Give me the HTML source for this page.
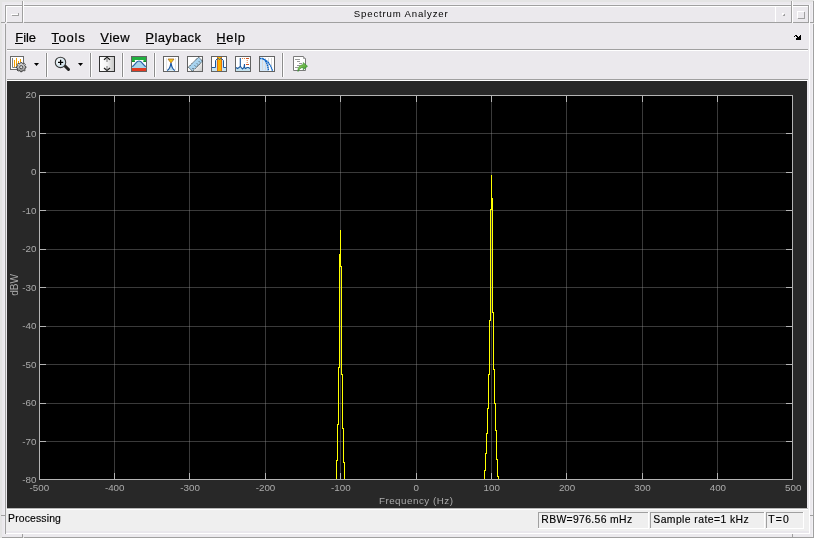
<!DOCTYPE html>
<html><head><meta charset="utf-8"><style>
html,body{margin:0;padding:0;width:814px;height:538px;overflow:hidden;background:#e4e4e4}
svg{display:block}
text{font-family:"Liberation Sans",sans-serif}
</style></head><body>
<svg width="814" height="538" viewBox="0 0 814 538">
<g shape-rendering="crispEdges">
<rect x="0" y="0" width="814" height="538" fill="#e4e4e4"/><rect x="2" y="2" width="811" height="535" fill="#ebe9ed"/><rect x="4" y="4" width="807" height="1" fill="#f0eff3"/><rect x="4" y="4" width="1" height="531" fill="#f0eff3"/><rect x="812" y="2" width="1" height="535" fill="#f2f1f5"/><rect x="6" y="6" width="803" height="16" fill="#ebe9ed"/><rect x="6" y="23" width="803" height="510" fill="#ebe9ed"/><rect x="5" y="5" width="787" height="1" fill="#a0a0a0"/><rect x="793" y="5" width="17" height="1" fill="#a0a0a0"/><rect x="6" y="6" width="785" height="1" fill="#ffffff"/><rect x="793" y="6" width="16" height="1" fill="#ffffff"/><rect x="5" y="5" width="1" height="17" fill="#a0a0a0"/><rect x="5" y="24" width="1" height="510" fill="#a0a0a0"/><rect x="6" y="6" width="1" height="16" fill="#ffffff"/><rect x="22" y="1" width="1" height="22" fill="#a0a0a0"/><rect x="23" y="1" width="1" height="21" fill="#ffffff"/><rect x="1" y="22" width="4" height="1" fill="#a0a0a0"/><rect x="7" y="22" width="15" height="1" fill="#a0a0a0"/><rect x="24" y="22" width="767" height="1" fill="#a0a0a0"/><rect x="793" y="22" width="16" height="1" fill="#a0a0a0"/><rect x="810" y="22" width="4" height="1" fill="#a0a0a0"/><rect x="775" y="6" width="1" height="16" fill="#ffffff"/><rect x="791" y="1" width="1" height="22" fill="#a0a0a0"/><rect x="792" y="1" width="1" height="22" fill="#ffffff"/><rect x="808" y="5" width="1" height="18" fill="#a0a0a0"/><rect x="809" y="5" width="1" height="529" fill="#ffffff"/><rect x="813" y="1" width="1" height="22" fill="#a0a0a0"/><rect x="813" y="24" width="1" height="514" fill="#a0a0a0"/><rect x="11" y="14" width="7" height="1" fill="#ffffff"/><rect x="12" y="15" width="7" height="1" fill="#a0a0a0"/><rect x="18" y="13" width="1" height="3" fill="#a0a0a0"/><rect x="782" y="13" width="2" height="1" fill="#ffffff"/><rect x="782" y="13" width="1" height="2" fill="#ffffff"/><rect x="783" y="15" width="2" height="1" fill="#a0a0a0"/><rect x="784" y="14" width="1" height="2" fill="#a0a0a0"/><rect x="797" y="11" width="7" height="1" fill="#ffffff"/><rect x="797" y="11" width="1" height="7" fill="#ffffff"/><rect x="798" y="18" width="7" height="1" fill="#a0a0a0"/><rect x="804" y="12" width="1" height="7" fill="#a0a0a0"/><rect x="1" y="515" width="4" height="1" fill="#a0a0a0"/><rect x="810" y="515" width="4" height="1" fill="#a0a0a0"/><rect x="6" y="533" width="803" height="1" fill="#ffffff"/><rect x="2" y="537" width="20" height="1" fill="#a0a0a0"/><rect x="24" y="537" width="789" height="1" fill="#a0a0a0"/><rect x="22" y="534" width="1" height="4" fill="#a0a0a0"/><rect x="792" y="534" width="1" height="4" fill="#a0a0a0"/><rect x="7" y="49" width="801" height="1" fill="#a0a0a0"/><rect x="7" y="50" width="801" height="1" fill="#ffffff"/><rect x="7" y="79" width="801" height="1" fill="#a0a0a0"/><rect x="7" y="80" width="801" height="1" fill="#ffffff"/><rect x="46" y="53" width="1" height="24" fill="#8c8c8c"/><rect x="47" y="53" width="1" height="24" fill="#ffffff"/><rect x="45" y="53" width="1" height="24" fill="#f4f3f6"/><rect x="90" y="53" width="1" height="24" fill="#8c8c8c"/><rect x="91" y="53" width="1" height="24" fill="#ffffff"/><rect x="89" y="53" width="1" height="24" fill="#f4f3f6"/><rect x="122" y="53" width="1" height="24" fill="#8c8c8c"/><rect x="123" y="53" width="1" height="24" fill="#ffffff"/><rect x="121" y="53" width="1" height="24" fill="#f4f3f6"/><rect x="154" y="53" width="1" height="24" fill="#8c8c8c"/><rect x="155" y="53" width="1" height="24" fill="#ffffff"/><rect x="153" y="53" width="1" height="24" fill="#f4f3f6"/><rect x="282" y="53" width="1" height="24" fill="#8c8c8c"/><rect x="283" y="53" width="1" height="24" fill="#ffffff"/><rect x="281" y="53" width="1" height="24" fill="#f4f3f6"/><rect x="7" y="81" width="800" height="427" fill="#282828"/><rect x="6" y="508" width="803" height="25" fill="#efefef"/><rect x="7" y="508" width="801" height="1" fill="#b8b8b8"/><rect x="7" y="509" width="801" height="1" fill="#ffffff"/><rect x="6" y="531" width="803" height="2" fill="#e9e7ec"/><rect x="538" y="512" width="110" height="1" fill="#a0a0a0"/><rect x="538" y="512" width="1" height="16" fill="#a0a0a0"/><rect x="538" y="528" width="111" height="1" fill="#ffffff"/><rect x="648" y="512" width="1" height="17" fill="#ffffff"/><rect x="650" y="512" width="114" height="1" fill="#a0a0a0"/><rect x="650" y="512" width="1" height="16" fill="#a0a0a0"/><rect x="650" y="528" width="115" height="1" fill="#ffffff"/><rect x="764" y="512" width="1" height="17" fill="#ffffff"/><rect x="766" y="512" width="37" height="1" fill="#a0a0a0"/><rect x="766" y="512" width="1" height="16" fill="#a0a0a0"/><rect x="766" y="528" width="38" height="1" fill="#ffffff"/><rect x="803" y="512" width="1" height="17" fill="#ffffff"/><rect x="39" y="95" width="754" height="385" fill="#000000"/><rect x="114" y="96" width="1" height="383" fill="rgba(150,150,150,0.39)"/><rect x="189" y="96" width="1" height="383" fill="rgba(150,150,150,0.39)"/><rect x="265" y="96" width="1" height="383" fill="rgba(150,150,150,0.39)"/><rect x="340" y="96" width="1" height="383" fill="rgba(150,150,150,0.39)"/><rect x="416" y="96" width="1" height="383" fill="rgba(150,150,150,0.39)"/><rect x="491" y="96" width="1" height="383" fill="rgba(150,150,150,0.39)"/><rect x="566" y="96" width="1" height="383" fill="rgba(150,150,150,0.39)"/><rect x="642" y="96" width="1" height="383" fill="rgba(150,150,150,0.39)"/><rect x="717" y="96" width="1" height="383" fill="rgba(150,150,150,0.39)"/><rect x="40" y="133" width="752" height="1" fill="rgba(150,150,150,0.39)"/><rect x="40" y="172" width="752" height="1" fill="rgba(150,150,150,0.39)"/><rect x="40" y="210" width="752" height="1" fill="rgba(150,150,150,0.39)"/><rect x="40" y="249" width="752" height="1" fill="rgba(150,150,150,0.39)"/><rect x="40" y="287" width="752" height="1" fill="rgba(150,150,150,0.39)"/><rect x="40" y="326" width="752" height="1" fill="rgba(150,150,150,0.39)"/><rect x="40" y="364" width="752" height="1" fill="rgba(150,150,150,0.39)"/><rect x="40" y="403" width="752" height="1" fill="rgba(150,150,150,0.39)"/><rect x="40" y="441" width="752" height="1" fill="rgba(150,150,150,0.39)"/><rect x="340" y="230" width="1" height="37" fill="#ffff00"/><rect x="339" y="254" width="1" height="114" fill="#ffff00"/><rect x="341" y="266" width="1" height="109" fill="#ffff00"/><rect x="338" y="367" width="1" height="58" fill="#ffff00"/><rect x="342" y="374" width="1" height="55" fill="#ffff00"/><rect x="337" y="424" width="1" height="37" fill="#ffff00"/><rect x="343" y="428" width="1" height="35" fill="#ffff00"/><rect x="336" y="460" width="1" height="20" fill="#ffff00"/><rect x="344" y="462" width="1" height="18" fill="#ffff00"/><rect x="491" y="175" width="1" height="35" fill="#ffff00"/><rect x="492" y="198" width="1" height="115" fill="#ffff00"/><rect x="490" y="209" width="1" height="112" fill="#ffff00"/><rect x="493" y="312" width="1" height="58" fill="#ffff00"/><rect x="489" y="320" width="1" height="55" fill="#ffff00"/><rect x="494" y="369" width="1" height="35" fill="#ffff00"/><rect x="488" y="374" width="1" height="35" fill="#ffff00"/><rect x="495" y="403" width="1" height="28" fill="#ffff00"/><rect x="487" y="408" width="1" height="26" fill="#ffff00"/><rect x="486" y="433" width="1" height="21" fill="#ffff00"/><rect x="496" y="430" width="1" height="30" fill="#ffff00"/><rect x="485" y="453" width="1" height="18" fill="#ffff00"/><rect x="497" y="459" width="1" height="18" fill="#ffff00"/><rect x="484" y="470" width="1" height="10" fill="#ffff00"/><rect x="498" y="476" width="1" height="4" fill="#ffff00"/><rect x="39" y="95" width="754" height="1" fill="#b4b4b4"/><rect x="39" y="479" width="754" height="1" fill="#b4b4b4"/><rect x="39" y="95" width="1" height="385" fill="#b4b4b4"/><rect x="792" y="95" width="1" height="385" fill="#b4b4b4"/><rect x="114" y="95" width="1" height="7" fill="#b4b4b4"/><rect x="114" y="473" width="1" height="7" fill="#b4b4b4"/><rect x="189" y="95" width="1" height="7" fill="#b4b4b4"/><rect x="189" y="473" width="1" height="7" fill="#b4b4b4"/><rect x="265" y="95" width="1" height="7" fill="#b4b4b4"/><rect x="265" y="473" width="1" height="7" fill="#b4b4b4"/><rect x="340" y="95" width="1" height="7" fill="#b4b4b4"/><rect x="340" y="473" width="1" height="7" fill="#b4b4b4"/><rect x="416" y="95" width="1" height="7" fill="#b4b4b4"/><rect x="416" y="473" width="1" height="7" fill="#b4b4b4"/><rect x="491" y="95" width="1" height="7" fill="#b4b4b4"/><rect x="491" y="473" width="1" height="7" fill="#b4b4b4"/><rect x="566" y="95" width="1" height="7" fill="#b4b4b4"/><rect x="566" y="473" width="1" height="7" fill="#b4b4b4"/><rect x="642" y="95" width="1" height="7" fill="#b4b4b4"/><rect x="642" y="473" width="1" height="7" fill="#b4b4b4"/><rect x="717" y="95" width="1" height="7" fill="#b4b4b4"/><rect x="717" y="473" width="1" height="7" fill="#b4b4b4"/><rect x="39" y="133" width="7" height="1" fill="#b4b4b4"/><rect x="786" y="133" width="7" height="1" fill="#b4b4b4"/><rect x="39" y="172" width="7" height="1" fill="#b4b4b4"/><rect x="786" y="172" width="7" height="1" fill="#b4b4b4"/><rect x="39" y="210" width="7" height="1" fill="#b4b4b4"/><rect x="786" y="210" width="7" height="1" fill="#b4b4b4"/><rect x="39" y="249" width="7" height="1" fill="#b4b4b4"/><rect x="786" y="249" width="7" height="1" fill="#b4b4b4"/><rect x="39" y="287" width="7" height="1" fill="#b4b4b4"/><rect x="786" y="287" width="7" height="1" fill="#b4b4b4"/><rect x="39" y="326" width="7" height="1" fill="#b4b4b4"/><rect x="786" y="326" width="7" height="1" fill="#b4b4b4"/><rect x="39" y="364" width="7" height="1" fill="#b4b4b4"/><rect x="786" y="364" width="7" height="1" fill="#b4b4b4"/><rect x="39" y="403" width="7" height="1" fill="#b4b4b4"/><rect x="786" y="403" width="7" height="1" fill="#b4b4b4"/><rect x="39" y="441" width="7" height="1" fill="#b4b4b4"/><rect x="786" y="441" width="7" height="1" fill="#b4b4b4"/><rect x="15" y="43" width="8" height="1" fill="#000"/><rect x="52" y="43" width="7" height="1" fill="#000"/><rect x="101" y="43" width="8" height="1" fill="#000"/><rect x="146" y="43" width="8" height="1" fill="#000"/><rect x="217" y="43" width="9" height="1" fill="#000"/>
</g>
<g style="will-change:transform">
<text x="36.5" y="98.3" font-size="9.8" fill="#ababab" text-anchor="end">20</text><text x="36.5" y="136.8" font-size="9.8" fill="#ababab" text-anchor="end">10</text><text x="36.5" y="175.3" font-size="9.8" fill="#ababab" text-anchor="end">0</text><text x="36.5" y="213.8" font-size="9.8" fill="#ababab" text-anchor="end">-10</text><text x="36.5" y="252.3" font-size="9.8" fill="#ababab" text-anchor="end">-20</text><text x="36.5" y="290.8" font-size="9.8" fill="#ababab" text-anchor="end">-30</text><text x="36.5" y="329.3" font-size="9.8" fill="#ababab" text-anchor="end">-40</text><text x="36.5" y="367.8" font-size="9.8" fill="#ababab" text-anchor="end">-50</text><text x="36.5" y="406.3" font-size="9.8" fill="#ababab" text-anchor="end">-60</text><text x="36.5" y="444.8" font-size="9.8" fill="#ababab" text-anchor="end">-70</text><text x="36.5" y="483.3" font-size="9.8" fill="#ababab" text-anchor="end">-80</text><text x="39.3" y="491.3" font-size="9.8" fill="#ababab" text-anchor="middle">-500</text><text x="114.7" y="491.3" font-size="9.8" fill="#ababab" text-anchor="middle">-400</text><text x="190.10000000000002" y="491.3" font-size="9.8" fill="#ababab" text-anchor="middle">-300</text><text x="265.50000000000006" y="491.3" font-size="9.8" fill="#ababab" text-anchor="middle">-200</text><text x="340.90000000000003" y="491.3" font-size="9.8" fill="#ababab" text-anchor="middle">-100</text><text x="416.3" y="491.3" font-size="9.8" fill="#ababab" text-anchor="middle">0</text><text x="491.70000000000005" y="491.3" font-size="9.8" fill="#ababab" text-anchor="middle">100</text><text x="567.1" y="491.3" font-size="9.8" fill="#ababab" text-anchor="middle">200</text><text x="642.5" y="491.3" font-size="9.8" fill="#ababab" text-anchor="middle">300</text><text x="717.9" y="491.3" font-size="9.8" fill="#ababab" text-anchor="middle">400</text><text x="793.3" y="491.3" font-size="9.8" fill="#ababab" text-anchor="middle">500</text><text x="378.90" y="503.6" font-size="9.8" fill="#ababab" textLength="74.10" lengthAdjust="spacing">Frequency (Hz)</text><text x="0" y="0" font-size="10" fill="#ababab" text-anchor="middle" transform="translate(18,285) rotate(-90)">dBW</text><text x="353.80" y="16.7" font-size="9.6" fill="#000" textLength="93.90" lengthAdjust="spacing">Spectrum Analyzer</text><text x="15.30" y="41.8" font-size="13" fill="#000" stroke="#000" stroke-width="0.2" textLength="20.60" lengthAdjust="spacing">File</text><text x="51.30" y="41.8" font-size="13" fill="#000" stroke="#000" stroke-width="0.2" textLength="33.50" lengthAdjust="spacing">Tools</text><text x="100.30" y="41.8" font-size="13" fill="#000" stroke="#000" stroke-width="0.2" textLength="29.40" lengthAdjust="spacing">View</text><text x="145.30" y="41.8" font-size="13" fill="#000" stroke="#000" stroke-width="0.2" textLength="55.70" lengthAdjust="spacing">Playback</text><text x="216.30" y="41.8" font-size="13" fill="#000" stroke="#000" stroke-width="0.2" textLength="28.60" lengthAdjust="spacing">Help</text><text x="8.10" y="521.8" font-size="10.4" fill="#000" stroke="#000" stroke-width="0.15" textLength="52.80" lengthAdjust="spacing">Processing</text><text x="541.30" y="522.7" font-size="10.4" fill="#000" stroke="#000" stroke-width="0.15" textLength="90.80" lengthAdjust="spacing">RBW=976.56 mHz</text><text x="653.30" y="522.7" font-size="10.4" fill="#000" stroke="#000" stroke-width="0.15" textLength="95.40" lengthAdjust="spacing">Sample rate=1 kHz</text><text x="768.30" y="522.7" font-size="10.4" fill="#000" stroke="#000" stroke-width="0.15" textLength="20.50" lengthAdjust="spacing">T=0</text>
</g>

<g fill="#000" shape-rendering="crispEdges"><rect x="794" y="36" width="1" height="1"/><rect x="795" y="35" width="2" height="1"/><rect x="796" y="36" width="2" height="1"/><rect x="797" y="37" width="4" height="1"/><rect x="799" y="36" width="2" height="1"/><rect x="800" y="35" width="1" height="1"/><rect x="796" y="38" width="5" height="2"/></g>

<defs>
<linearGradient id="gGear" x1="0" y1="0" x2="0" y2="1"><stop offset="0" stop-color="#e8e8e8"/><stop offset="1" stop-color="#8a8a8a"/></linearGradient>
<linearGradient id="gBox" x1="0" y1="0" x2="1" y2="0"><stop offset="0" stop-color="#ffffff"/><stop offset="0.5" stop-color="#f4f4f4"/><stop offset="1" stop-color="#c4c4c4"/></linearGradient>
<linearGradient id="gBox2" x1="0" y1="0" x2="1" y2="1"><stop offset="0.45" stop-color="#ffffff"/><stop offset="1" stop-color="#c8c8c8"/></linearGradient>
<radialGradient id="gLens" cx="0.4" cy="0.4" r="0.6"><stop offset="0" stop-color="#ffffff"/><stop offset="1" stop-color="#c8dde8"/></radialGradient>
<linearGradient id="gArrow" x1="0" y1="0" x2="1" y2="1"><stop offset="0" stop-color="#b8e070"/><stop offset="1" stop-color="#1f8a1f"/></linearGradient>
</defs>
<!-- icon1: spectrum settings -->
<g>
<rect x="10.5" y="56.5" width="13" height="13" fill="#ffffff" stroke="#6a6a6a" stroke-width="1"/>
<path d="M12.5 58 V67.5 H18" stroke="#808080" stroke-width="1" fill="none"/>
<rect x="14" y="60" width="1" height="7" fill="#f5a000"/>
<rect x="16" y="58" width="1" height="8" fill="#f5a000"/>
<rect x="18" y="61" width="1" height="3" fill="#f5a000"/>
<rect x="20" y="59" width="1" height="3" fill="#f5a000"/>
<g transform="translate(21.2,67) scale(0.84)">
<path d="M-1 -5.2 L1 -5.2 L1.3 -4.1 L2.6 -3.6 L3.6 -4.4 L4.9 -3.1 L4.1 -2.1 L4.6 -0.8 L5.6 -0.6 L5.6 1.2 L4.6 1.4 L4.1 2.6 L4.9 3.6 L3.6 4.9 L2.6 4.1 L1.3 4.6 L1 5.6 L-1 5.6 L-1.3 4.6 L-2.6 4.1 L-3.6 4.9 L-4.9 3.6 L-4.1 2.6 L-4.6 1.4 L-5.6 1.2 L-5.6 -0.6 L-4.6 -0.8 L-4.1 -2.1 L-4.9 -3.1 L-3.6 -4.4 L-2.6 -3.6 L-1.3 -4.1 Z" fill="url(#gGear)" stroke="#3a3a3a" stroke-width="1.1"/>
<circle cx="0" cy="0.2" r="1.9" fill="#dcdcdc" stroke="#3a3a3a" stroke-width="1"/>
</g>
</g>
<path d="M34 63 H39 L36.5 66 Z" fill="#000"/>
<!-- icon2: zoom -->
<g>
<path d="M65 66 L68.5 69.5" stroke="#222" stroke-width="3" stroke-linecap="round"/>
<circle cx="60.5" cy="62.4" r="5.2" fill="url(#gLens)" stroke="#3c3c3c" stroke-width="1.1"/>
<path d="M58 62.4 H63.2 M60.6 59.8 V65" stroke="#000" stroke-width="1.3"/>
</g>
<path d="M78 63 H83 L80.5 66 Z" fill="#000"/>
<!-- icon3: scale -->
<g>
<rect x="99.5" y="56.5" width="15" height="15" fill="url(#gBox)" stroke="#333" stroke-width="1"/>
<path d="M104 59.8 L107 57.3 L110 59.8 M104 68 L107 70.5 L110 68" stroke="#222" stroke-width="1.2" fill="none"/>
<path d="M107 59 V62 M107 66 V69" stroke="#888" stroke-width="1.2"/>
</g>
<!-- icon4: spectral mask -->
<g>
<rect x="131.5" y="56.5" width="15" height="15" fill="#ffffff" stroke="#636363" stroke-width="1"/>
<path d="M132 57 H146 V62 H143.5 V60 H134.8 V62 H132 Z" fill="#22b040"/><path d="M132 61.5 H134.8 M143.5 61.5 H146" stroke="#148a28" stroke-width="1"/>
<path d="M132 66.5 C134.5 66.5 135.5 61 139 61 C142.5 61 143.5 66.5 146 66.5 V68 H132 Z" fill="#a8d4ec"/>
<path d="M132 66.5 C134.5 66.5 135.5 61 139 61 C142.5 61 143.5 66.5 146 66.5" stroke="#2a64a8" stroke-width="1.2" fill="none"/>
<rect x="132" y="68" width="14" height="3" fill="#e23a22"/>
</g>
<!-- icon5: peak finder -->
<g>
<rect x="163.5" y="56.5" width="15" height="15" fill="#ffffff" stroke="#636363" stroke-width="1"/>
<rect x="166" y="58" width="1" height="12" fill="#e4e4e4"/>
<rect x="175" y="58" width="1" height="12" fill="#e0e0e0"/>
<path d="M167 70.5 C169.5 69.5 170.5 66 171 63 C171.5 66 172.5 69.5 175 70.5 Z" fill="#b8dcee"/>
<path d="M167 70.5 C169.5 69.5 170.5 66 171 63 C171.5 66 172.5 69.5 175 70.5" stroke="#1f5aa4" stroke-width="1.3" fill="none"/>
<path d="M168 59 H174 L171 63 Z" fill="#f8cc10" stroke="#a86a28" stroke-width="0.8"/>
</g>
<!-- icon6: ruler -->
<g>
<rect x="187.5" y="56.5" width="15" height="15" fill="url(#gBox2)" stroke="#636363" stroke-width="1"/>
<path d="M188.3 67.2 L198.6 57 L202.6 61.2 L192.5 71.2 Z" fill="#a8d4f0" stroke="#202020" stroke-width="1" stroke-dasharray="1 0.7"/>
<path d="M192.5 68 L193.5 69 M194.8 65.5 L195.8 66.5 M197 63.5 L198 64.5 M199 61.4 L200 62.4" stroke="#333" stroke-width="0.9"/>
</g>
<!-- icon7: channel measurement -->
<g>
<rect x="211.5" y="56.5" width="15" height="15" fill="#ffffff" stroke="#636363" stroke-width="1"/>
<path d="M212 67.5 H215.5 V60.5 L217 59 H222 L223.5 60.5 V67.5 H226 V71 H212 Z" fill="#c8e6f2"/>
<rect x="217" y="57" width="5" height="14" fill="#f8b400"/>
<rect x="217" y="57" width="1" height="14" fill="#e07010"/>
<rect x="221" y="57" width="1" height="14" fill="#e07010"/>
<path d="M212 67.5 H215.5 V60.5 L217 59 L218.3 58.5 L219.5 59.5 L220.7 58.5 L222 59 L223.5 60.5 V67.5 H226" stroke="#1a58a0" stroke-width="1" fill="none"/>
</g>
<!-- icon8: distortion -->
<g>
<rect x="235.5" y="56.5" width="15" height="15" fill="#ffffff" stroke="#636363" stroke-width="1"/>
<path d="M236 67.5 L237.5 68.5 L239 67.5 L240.5 66.5 V58 V66.5 L241.5 68 L242.5 69 L244 67.5 L244.5 64 V67.5 L245.5 68.5 L247 67.5 L248.5 67.5 L250 68.5 V71 H236 Z" fill="#c4e2ee"/>
<path d="M236 67.5 L237.5 68.5 L239 67.5 L240.3 66.5 V58 M240.5 66.5 L241.5 68 L242.5 69 L244 67.5 L244.5 64 V67.5 L245.5 68.5 L247 67.5 L248.5 67.5 L250 68.5" stroke="#1a58a0" stroke-width="1.1" fill="none"/>
<circle cx="242.5" cy="58.5" r="0.6" fill="#e07020"/>
<circle cx="244.5" cy="58.5" r="0.6" fill="#e07020"/>
<rect x="246" y="58" width="3" height="1" fill="#d05020"/>
<circle cx="247.2" cy="60.5" r="0.6" fill="#e07020"/>
<circle cx="247.2" cy="62.5" r="0.6" fill="#e07020"/>
<rect x="246" y="64" width="3" height="1" fill="#d05020"/>
</g>
<!-- icon9: CCDF -->
<g>
<rect x="259.5" y="56.5" width="15" height="15" fill="#ffffff" stroke="#636363" stroke-width="1"/>
<path d="M260 58.5 H262.5 C266 59.5 267.5 63 268.5 71 H260 Z" fill="#d4e8fa"/>
<rect x="262" y="58" width="1" height="12" fill="#d8d8d8"/>
<rect x="265" y="58" width="1" height="12" fill="#d8d8d8"/>
<rect x="268" y="58" width="1" height="12" fill="#dadada"/>
<rect x="271" y="58" width="1" height="12" fill="#dadada"/>
<path d="M260 58.5 H262.5 C265.5 59.5 267.5 63 268.5 70.8 M262.5 58.8 C266 60 270 62.5 272.5 70.8" stroke="#0a64c8" stroke-width="1.4" fill="none" stroke-dasharray="1.6 0.5"/>
</g>
<!-- icon10: export -->
<g>
<path d="M293.5 56.5 H303.5 L305.5 58.5 V70.5 H293.5 Z" fill="#ffffff" stroke="#7a7a7a" stroke-width="1"/>
<path d="M303.5 56.5 V58.5 H305.5" fill="#e0e0e0" stroke="#8a8a8a" stroke-width="0.8"/>
<path d="M295 59.5 H300 M297 61.5 H300 M299 63.5 H302 M297 65.5 H300 M295 67.5 H298" stroke="#9a9a9a" stroke-width="1"/>
<path d="M298 71.5 C297.6 67 300 64.8 303.2 64.8 V62.6 L307.5 66.2 L303.2 69.8 V67.4 C301.2 67.4 299.6 68.6 298 71.5 Z" fill="url(#gArrow)" stroke="#2a8a2a" stroke-width="0.6"/>
</g>

</svg>
</body></html>
